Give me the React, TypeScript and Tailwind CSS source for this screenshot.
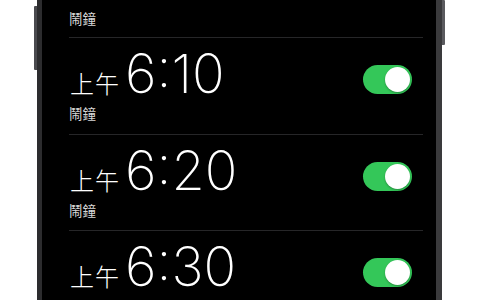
import React from "react";

const cjk = { fontFamily: '"Noto Sans CJK TC", "Noto Sans CJK SC", sans-serif' };
const num = { fontFamily: 'Inter, "Noto Sans", sans-serif' };

function Toggle() {
  return (
    <div className="mt-[27px] flex h-[29px] w-[49px] items-center justify-end rounded-full bg-[#34c759] p-[2px]">
      <div className="h-[25px] w-[25px] rounded-full bg-white shadow-[0_1px_2px_rgba(0,0,0,0.3)]" />
    </div>
  );
}

function AlarmRow({ time }: { time: string }) {
  return (
    <div className="flex h-[96.5px] shrink-0 items-start justify-between border-b border-[#262628] pr-[11px]">
      <div className="flex flex-col pt-[9px]">
        <div className="flex items-baseline text-white">
          <span className="ml-[1px] text-[24px] font-light leading-none tracking-[1px] text-white" style={cjk}>
            上午
          </span>
          <span className="ml-[5px] text-[54px] font-extralight leading-none" style={num}>
            {time}
          </span>
        </div>
        <div className="mt-[6px] text-[13.5px] leading-none text-[#d6d6d6]" style={cjk}>
          鬧鐘
        </div>
      </div>
      <Toggle />
    </div>
  );
}

export default function App() {
  return (
    <div className="flex h-[300px] w-[480px] overflow-hidden bg-white">
      <div className="w-[34px] shrink-0" />
      <div className="mt-[6px] h-[64px] w-[3px] shrink-0 rounded-l-[1px] bg-[#4a4a4e]" />
      <div className="flex h-full w-[405px] shrink-0 overflow-hidden border-l-[5px] border-r-[6px] border-l-[#2c2c2e] border-r-[#3a3a3c] bg-black">
        <div className="ml-[27px] mr-[13px] flex flex-1 flex-col">
          <div className="h-[38px] shrink-0 border-b border-[#262628] pt-[12px]">
            <div className="text-[13.5px] leading-none text-[#d6d6d6]" style={cjk}>
              鬧鐘
            </div>
          </div>
          <AlarmRow time="6:10" />
          <AlarmRow time="6:20" />
          <AlarmRow time="6:30" />
        </div>
      </div>
      <div className="h-[45px] w-[3px] shrink-0 rounded-r-[1px] bg-[#5a5a5e]" />
    </div>
  );
}
